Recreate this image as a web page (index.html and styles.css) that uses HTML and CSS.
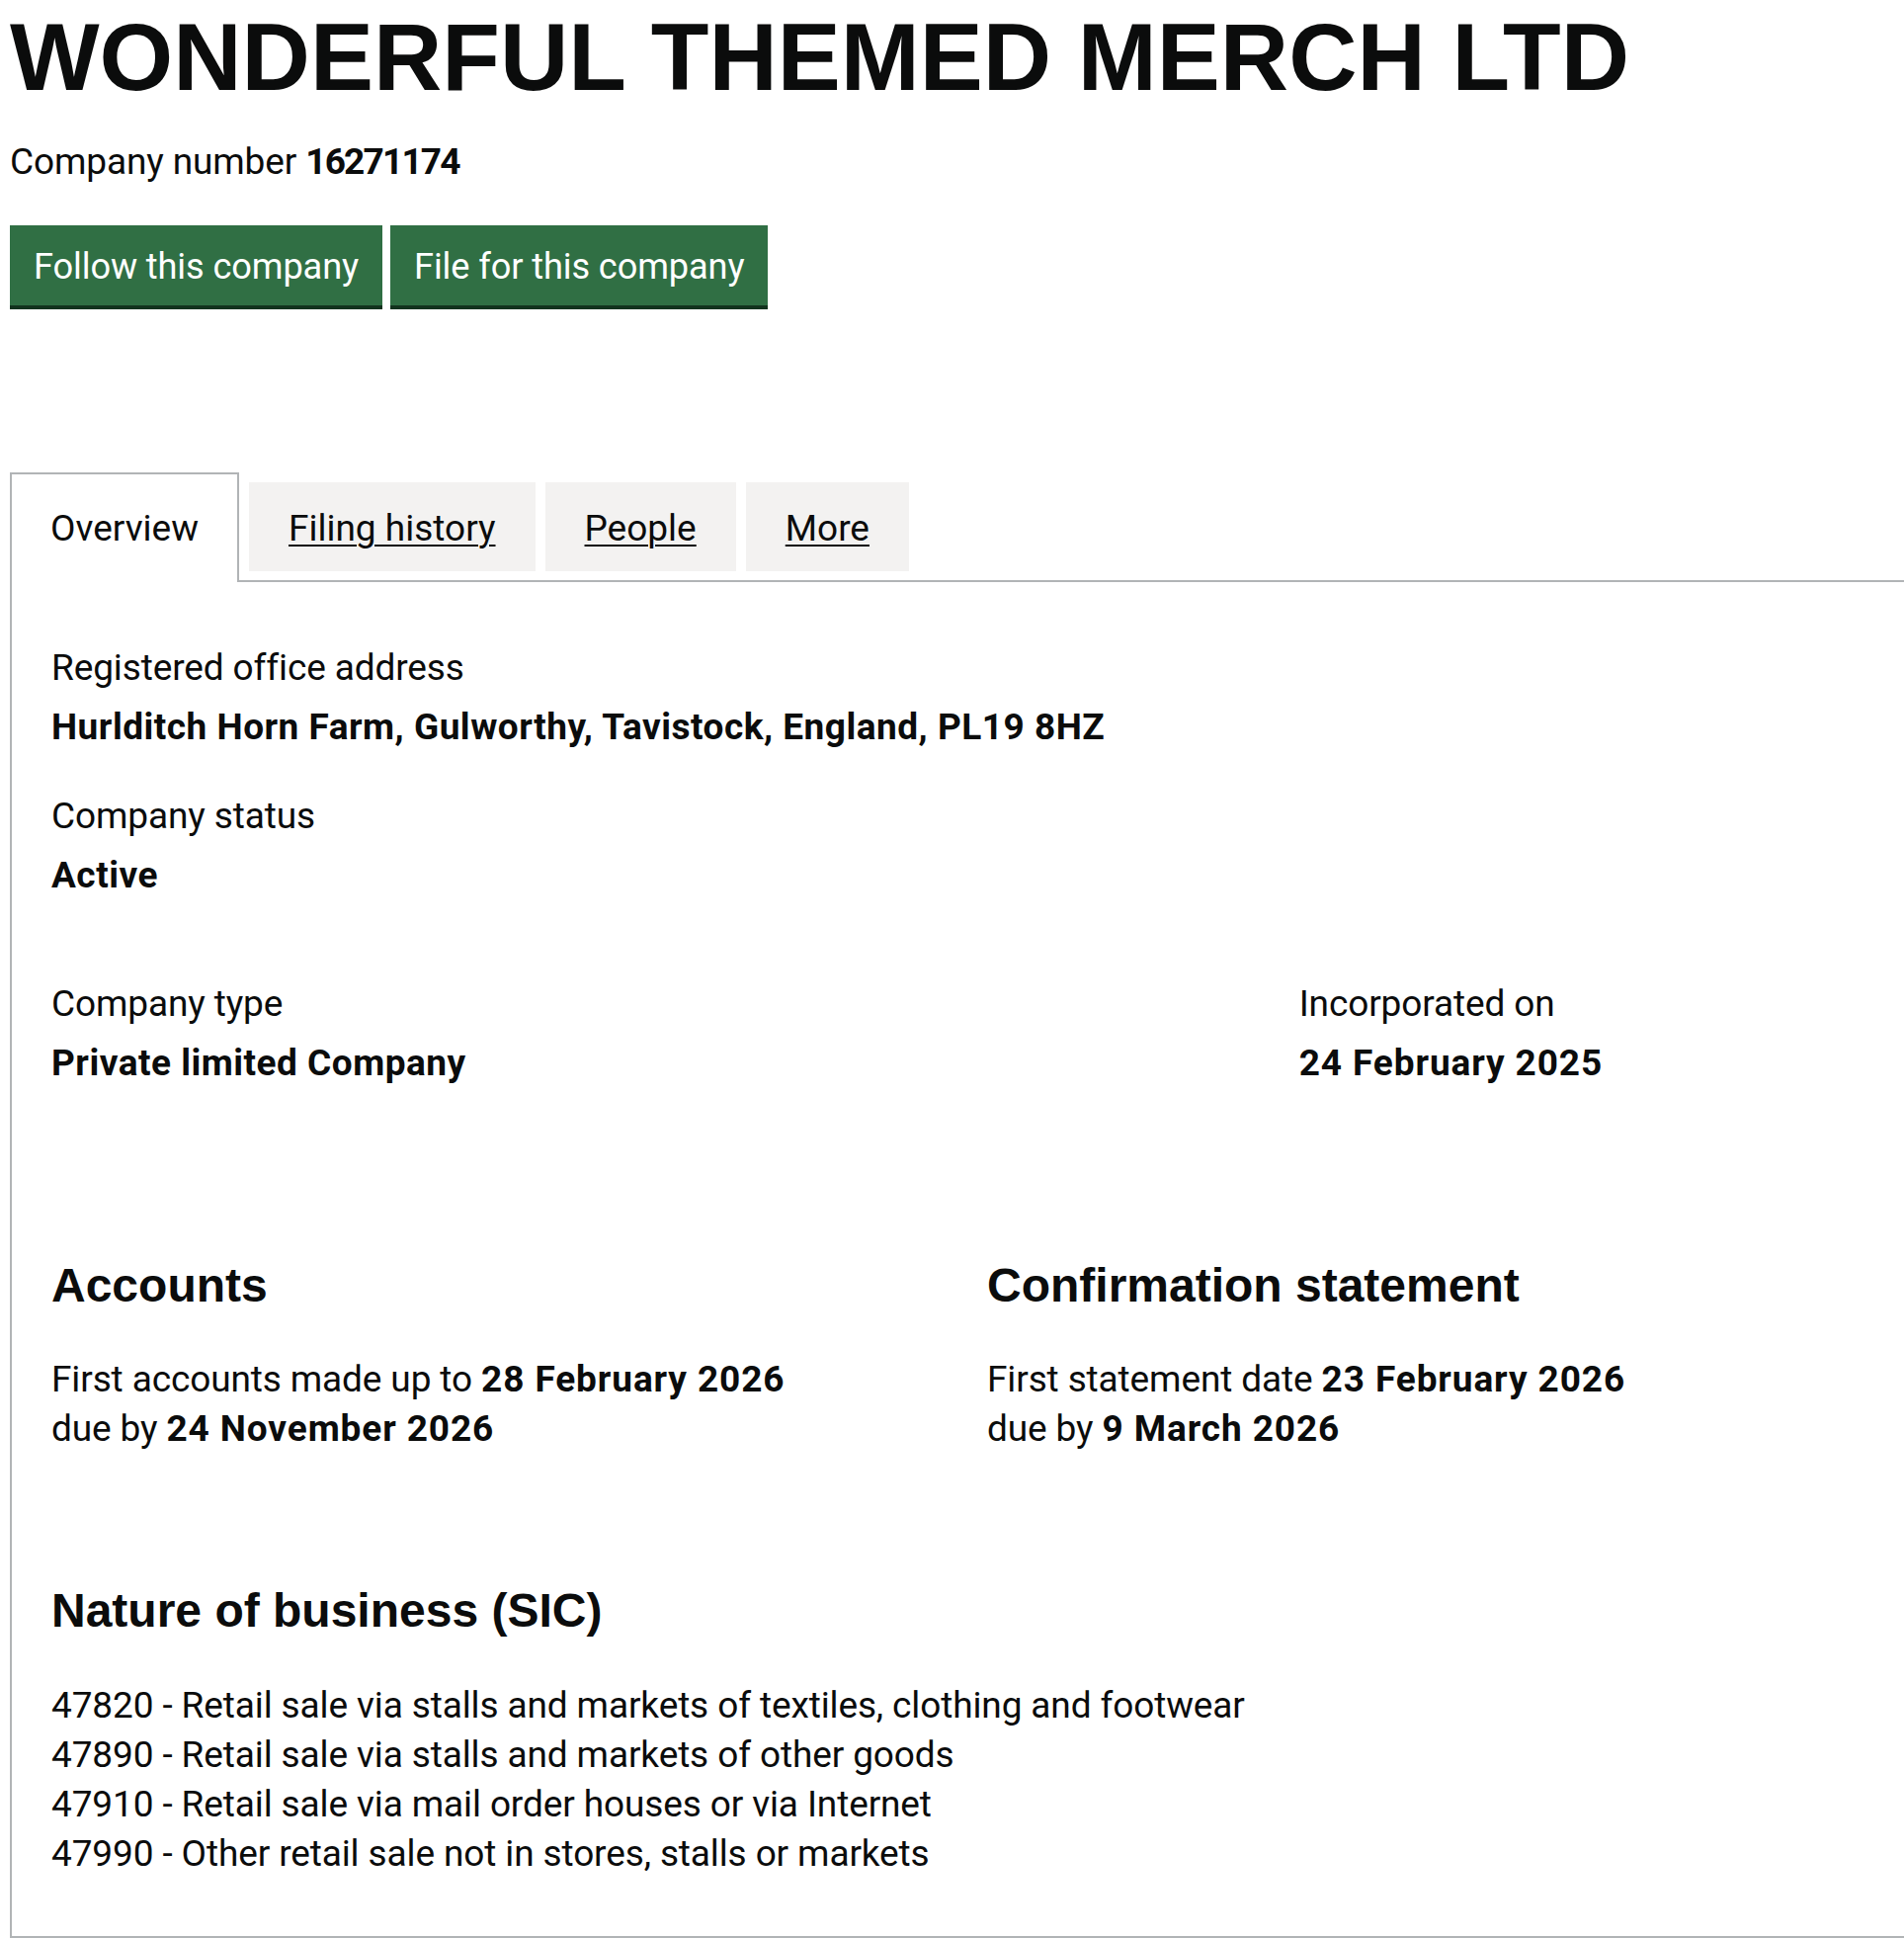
FILE: index.html
```html
<!DOCTYPE html>
<html lang="en">
<head>
<meta charset="utf-8">
<title>WONDERFUL THEMED MERCH LTD - Overview</title>
<link rel="stylesheet" href="styles.css">
</head>
<body>
<main class="page">
  <h1 class="title">WONDERFUL THEMED MERCH LTD</h1>
  <p class="company-number">Company number <strong class="number">16271174</strong></p>
  <div class="actions">
    <a class="button" href="#">Follow this company</a>
    <a class="button" href="#">File for this company</a>
  </div>

  <div class="tabs">
    <ul class="tab-list">
      <li class="tab tab-active">Overview</li>
      <li class="tab"><a class="tab-link" href="#">Filing history</a></li>
      <li class="tab"><a class="tab-link" href="#">People</a></li>
      <li class="tab"><a class="tab-link" href="#">More</a></li>
    </ul>

    <div class="panel">
      <dl class="facts">
        <dt class="fact-label">Registered office address</dt>
        <dd class="fact-value">Hurlditch Horn Farm, Gulworthy, Tavistock, England, PL19 8HZ</dd>
        <dt class="fact-label fact-label-spaced">Company status</dt>
        <dd class="fact-value">Active</dd>
      </dl>

      <div class="row row-facts">
        <dl class="col col-two-thirds">
          <dt class="fact-label">Company type</dt>
          <dd class="fact-value">Private limited Company</dd>
        </dl>
        <dl class="col col-third">
          <dt class="fact-label">Incorporated on</dt>
          <dd class="fact-value fact-value-date">24 February 2025</dd>
        </dl>
      </div>

      <div class="row row-sections">
        <section class="col col-half">
          <h2 class="section-heading">Accounts</h2>
          <p class="section-text">First accounts made up to <strong class="date">28 February 2026</strong><br>due by <strong class="date">24 November 2026</strong></p>
        </section>
        <section class="col col-half">
          <h2 class="section-heading">Confirmation statement</h2>
          <p class="section-text">First statement date <strong class="date">23 February 2026</strong><br>due by <strong class="date">9 March 2026</strong></p>
        </section>
      </div>

      <h2 class="section-heading sic-heading">Nature of business (SIC)</h2>
      <ul class="sic-list">
        <li>47820 - Retail sale via stalls and markets of textiles, clothing and footwear</li>
        <li>47890 - Retail sale via stalls and markets of other goods</li>
        <li>47910 - Retail sale via mail order houses or via Internet</li>
        <li>47990 - Other retail sale not in stores, stalls or markets</li>
      </ul>
    </div>
  </div>
</main>
</body>
</html>
```

FILE: styles.css
```css
html, body {
  margin: 0;
  padding: 0;
  background: #ffffff;
}

body {
  font-family: Roboto, "Liberation Sans", Arial, sans-serif;
  font-size: 37px;
  line-height: 50px;
  letter-spacing: -0.12px;
  color: #0b0c0c;
  overflow-x: hidden;
}

.page {
  padding: 0 0 0 10px;
}

strong {
  font-weight: 700;
  letter-spacing: 0.5px;
}

.title {
  margin: 8px 0 0;
  font-family: "Liberation Sans", Arial, sans-serif;
  font-weight: 700;
  font-size: 96px;
  line-height: 100px;
  letter-spacing: 0;
}

.company-number {
  margin: 31px 0 0;
}

.number {
  letter-spacing: -1.8px;
}

.actions {
  display: flex;
  gap: 8px;
  margin-top: 39px;
}

.button {
  display: block;
  padding: 17px 24px 14px;
  font-size: 36.2px;
  line-height: 50px;
  letter-spacing: -0.12px;
  color: #ffffff;
  background: #306f44;
  box-shadow: 0 4px 0 #12331e;
  text-decoration: none;
}

.tabs {
  margin-top: 169px;
}

.tab-list {
  display: flex;
  align-items: flex-end;
  gap: 10px;
  margin: 0;
  padding: 0;
  list-style: none;
  border-bottom: 2px solid #b1b4b6;
}

.tab {
  padding: 22px 40px 18px;
  margin-bottom: 9px;
  letter-spacing: 0;
  background: #f3f2f1;
}

.tab-active {
  padding: 30px 39px 29px;
  margin-bottom: -2px;
  background: #ffffff;
  border: 2px solid #b1b4b6;
  border-bottom: 0;
}

.tab-link {
  color: #0b0c0c;
  text-decoration: underline;
  text-decoration-thickness: 2px;
  text-underline-offset: 4px;
}

.panel {
  padding: 62px 41px 58px 40px;
  border-left: 2px solid #b1b4b6;
  border-bottom: 2px solid #b1b4b6;
}

.facts {
  margin: 0;
}

.fact-label {
  margin: 0;
}

.fact-value {
  margin: 10px 0 0;
  font-weight: 700;
  letter-spacing: 0.5px;
}

.fact-value-date,
.date {
  letter-spacing: 0.9px;
}

.fact-label-spaced {
  margin-top: 40px;
}

.row {
  display: flex;
  margin: 0 -30px;
}

.col {
  box-sizing: border-box;
  padding: 0 30px;
  margin: 0;
}

.col-two-thirds {
  width: 66.6667%;
}

.col-third {
  width: 33.3333%;
}

.col-half {
  width: 50%;
}

.row-facts {
  margin-top: 80px;
}

.row-sections {
  margin-top: 170px;
}

.section-heading {
  margin: 0;
  font-family: "Liberation Sans", Arial, sans-serif;
  font-weight: 700;
  font-size: 48px;
  line-height: 60px;
  letter-spacing: 0;
}

.section-text {
  margin: 40px 0 0;
}

.sic-heading {
  margin-top: 129px;
}

.sic-list {
  margin: 41px 0 0;
  padding: 0;
  list-style: none;
}
```
